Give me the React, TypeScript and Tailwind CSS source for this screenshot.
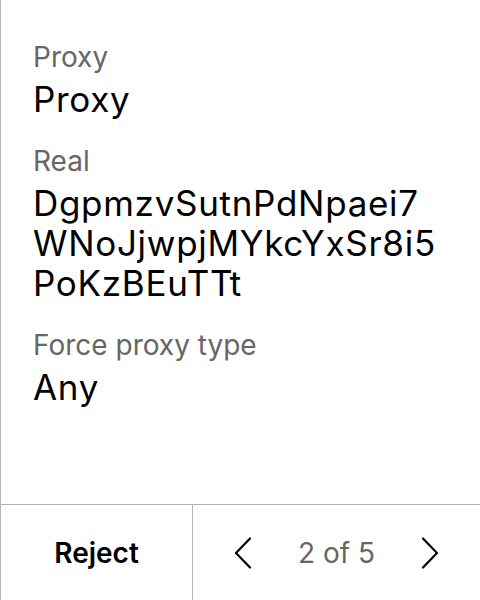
import React from "react";

const Chevron = ({ dir }: { dir: "left" | "right" }) => (
  <svg width="18" height="32" viewBox="0 0 18 32" fill="none" stroke="#000" strokeWidth="2.2" strokeLinecap="round" strokeLinejoin="round">
    {dir === "left" ? <path d="M16 1.5 L2 16 L16 30.5" /> : <path d="M2 1.5 L16 16 L2 30.5" />}
  </svg>
);

export default function App() {
  return (
    <div className="w-[480px] h-[600px] flex flex-col bg-white border-l border-[#b4b4b4]" style={{ fontFamily: "Inter, 'Noto Sans', sans-serif" }}>
      <div className="flex-1 pl-[32px] pr-4 pt-[40px] flex flex-col">
        <div className="text-[28px] leading-[34px] text-[#666]">Proxy</div>
        <div className="text-[35px] leading-[40px] tracking-[0.02em] text-black mt-[5px]">Proxy</div>
        <div className="text-[28px] leading-[34px] text-[#666] mt-[25px]">Real</div>
        <div className="text-[35px] leading-[40px] tracking-[0.02em] text-black mt-[5px] break-all">
          DgpmzvSutnPdNpaei7<br />WNoJjwpjMYkcYxSr8i5<br />PoKzBEuTTt
        </div>
        <div className="text-[28px] leading-[34px] text-[#666] mt-[25px]">Force proxy type</div>
        <div className="text-[35px] leading-[40px] tracking-[0.02em] text-black mt-[5px]">Any</div>
      </div>
      <div className="h-[96px] border-t border-[#b4b4b4] flex">
        <div className="w-[192px] border-r border-[#b4b4b4] flex items-center justify-center text-[28px] font-semibold text-black">Reject</div>
        <div className="flex-1 flex items-center justify-center gap-[46px]">
          <Chevron dir="left" />
          <span className="text-[28px] text-[#666]">2 of 5</span>
          <Chevron dir="right" />
        </div>
      </div>
    </div>
  );
}
